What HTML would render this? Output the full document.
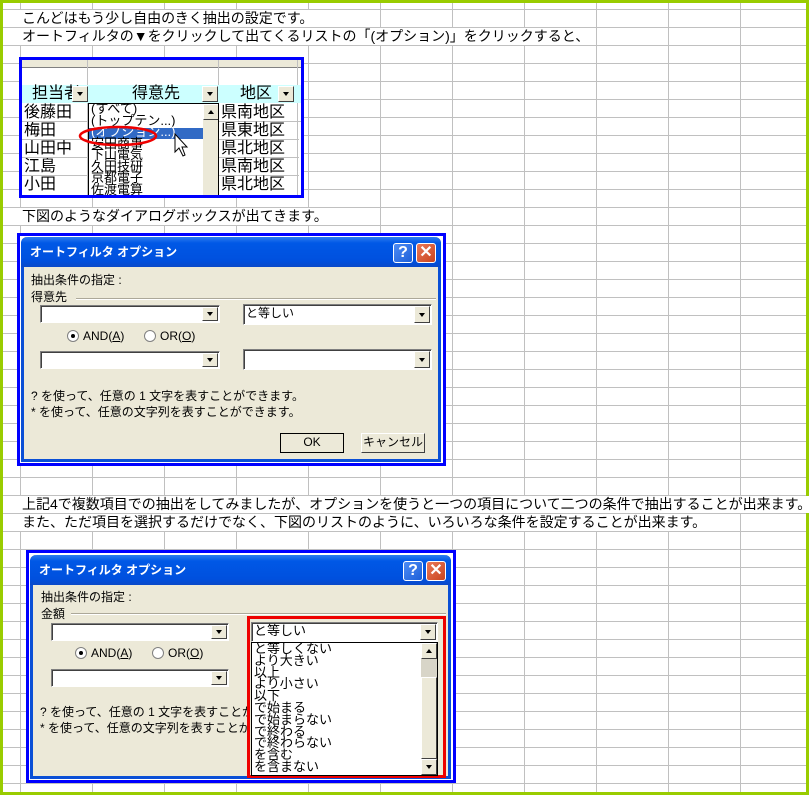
<!DOCTYPE html>
<html><head><meta charset="utf-8"><style>
*{margin:0;padding:0;box-sizing:border-box}
body{width:809px;height:795px;position:relative;overflow:hidden;background:#fff;
font-family:"Liberation Sans","Noto Sans CJK JP","IPAGothic",sans-serif;color:#000}
#grid{position:absolute;left:0;top:0;width:809px;height:795px;
background:linear-gradient(to right,#c0c0c0 1px,transparent 1px) 20px 0/72px 100%,
linear-gradient(#c0c0c0 1px,transparent 1px) 0 9px/100% 18px}
.a{position:absolute}
.t{position:absolute;background:#fff;font-size:14px;line-height:17px;height:17px;white-space:nowrap;padding-left:2px}
.frame{position:absolute;border:3px solid #0000ff;background:#fff;overflow:hidden}
.dlg{position:absolute;background:#ece9d8;border:3px solid #0a4fd6;border-top:none;border-radius:6px 6px 0 0;font-size:12px}
.title{position:absolute;left:-3px;right:-3px;top:0;height:30px;border-radius:7px 7px 0 0;
background:linear-gradient(#2d7cf0,#0058e6 20%,#0050de 80%,#0a49c8);color:#fff;font-weight:bold;font-size:12px;line-height:30px;padding-left:9px}
.hb,.xb{position:absolute;top:6px;width:20px;height:20px;border:1px solid #fff;border-radius:3px;color:#fff;font-weight:bold;text-align:center;line-height:18px;font-size:16px}
.hb{background:linear-gradient(135deg,#4d8cf5,#1d5fd8)}
.xb{background:linear-gradient(135deg,#e9795a,#c9441e)}
.cb{position:absolute;background:#fff;border:1px solid #7f7f7f;border-right-color:#fff;border-bottom-color:#fff;box-shadow:inset 1px 1px 0 #404040;font-size:12px;line-height:16px;padding-left:2px}
.btn{position:absolute;right:1px;top:1px;bottom:1px;width:16px;background:#ece9d8;border:1px solid;border-color:#fff #404040 #404040 #fff}
.btn:after{content:"";position:absolute;left:4px;top:50%;margin-top:-2px;border:3px solid transparent;border-top:4px solid #000;border-bottom:none}
.push{position:absolute;height:20px;background:#ece9d8;border:1px solid;border-color:#fff #404040 #404040 #fff;text-align:center;font-size:12px;line-height:17px}
.rad{position:absolute;width:12px;height:12px;border-radius:50%;background:#fff;border:1px solid #808080}
.rad.on:after{content:"";position:absolute;left:3px;top:3px;width:4px;height:4px;border-radius:50%;background:#000}
.sb{position:absolute;background:#ece9d8}
.sbb{position:absolute;left:0;width:16px;height:16px;background:#ece9d8;border:1px solid;border-color:#fff #404040 #404040 #fff}
.up:after,.dn:after{content:"";position:absolute;left:4px;top:5px;border:3px solid transparent}
.up:after{border-bottom:4px solid #000;border-top:none}
.dn:after{border-top:4px solid #000;border-bottom:none}
</style></head><body>
<div id="grid"></div>
<div class="a" style="left:0;top:0;width:809px;height:3px;background:#99cc00"></div>
<div class="a" style="left:0;top:0;width:3px;height:795px;background:#99cc00"></div>
<div class="a" style="left:806px;top:0;width:3px;height:795px;background:#99cc00"></div>
<div class="a" style="left:0;top:792px;width:809px;height:3px;background:#99cc00"></div>

<div class="t" style="left:20px;top:10px">こんどはもう少し自由のきく抽出の設定です。</div>
<div class="t" style="left:20px;top:28px">オートフィルタの▼をクリックして出てくるリストの「(オプション)」をクリックすると、</div>

<div class="frame" style="left:19px;top:57px;width:285px;height:141px">
 <div class="a" style="left:0;top:0;width:300px;height:8px;background:#ece9d8;border-bottom:1px solid #808080"></div>
 <div class="a" style="left:65px;top:0;width:1px;height:140px;background:#c0c0c0"></div>
 <div class="a" style="left:196px;top:0;width:1px;height:140px;background:#c0c0c0"></div>
 <div class="a" style="left:275px;top:0;width:1px;height:140px;background:#c0c0c0"></div>
 <div class="a" style="left:0;top:25px;width:280px;height:18px;background:#ccffff;font-size:16px;line-height:18px">
  <span class="a" style="left:10px">担当者</span><span class="a" style="left:110px">得意先</span><span class="a" style="left:218px">地区</span>
  <div class="a" style="left:50px;top:1px;width:16px;height:16px;background:#ece9d8;border:1px solid;border-color:#fff #404040 #404040 #fff"><div class="dn a" style="left:0;top:0;width:14px;height:14px"></div></div>
  <div class="a" style="left:180px;top:1px;width:16px;height:16px;background:#ece9d8;border:1px solid;border-color:#fff #404040 #404040 #fff"><div class="dn a" style="left:0;top:0;width:14px;height:14px"></div></div>
  <div class="a" style="left:256px;top:1px;width:16px;height:16px;background:#ece9d8;border:1px solid;border-color:#fff #404040 #404040 #fff"><div class="dn a" style="left:0;top:0;width:14px;height:14px"></div></div>
 </div>
 <div class="a" style="left:2px;top:44px;font-size:16px;line-height:18px">後藤田<br>梅田<br>山田中<br>江島<br>小田</div>
 <div class="a" style="left:0;top:61px;width:280px;height:1px;background:#c0c0c0"></div>
 <div class="a" style="left:0;top:79px;width:65px;height:1px;background:#c0c0c0"></div>
 <div class="a" style="left:0;top:97px;width:65px;height:1px;background:#c0c0c0"></div>
 <div class="a" style="left:0;top:115px;width:65px;height:1px;background:#c0c0c0"></div>
 <div class="a" style="left:197px;top:79px;width:80px;height:1px;background:#c0c0c0"></div>
 <div class="a" style="left:197px;top:97px;width:80px;height:1px;background:#c0c0c0"></div>
 <div class="a" style="left:197px;top:115px;width:80px;height:1px;background:#c0c0c0"></div>
 <div class="a" style="left:199px;top:44px;font-size:16px;line-height:18px">県南地区<br>県東地区<br>県北地区<br>県南地区<br>県北地区</div>
 <div class="a" style="left:66px;top:43px;width:131px;height:95px;background:#fff;border:1px solid #000;overflow:hidden">
  <div class="a" style="left:0;top:24px;width:114px;height:11px;background:#316ac5"></div>
  <div class="a" style="left:2px;top:-1px;font-size:13px;line-height:11.5px">(すべて)<br>(トップテン...)<br><span style="color:#fff">(オプション...)</span><br>安田商事<br>下山電気<br>久田技研<br>京都電子<br>佐渡電算</div>
  <div class="sb" style="left:114px;top:0;width:16px;height:95px"><div class="sbb up" style="top:0"></div></div>
 </div>
 <svg class="a" style="left:0;top:0" width="285" height="141"><ellipse cx="96" cy="76" rx="38" ry="9" fill="none" stroke="#e00" stroke-width="2.5"/>
 <path d="M153 74 L153 92 L157 88 L161 96 L163 95 L160 87 L165 87 Z" fill="#fff" stroke="#000" stroke-width="1"/></svg>
</div>

<div class="t" style="left:20px;top:208px">下図のようなダイアログボックスが出てきます。</div>

<div class="frame" style="left:17px;top:233px;width:429px;height:233px"></div>
<div class="dlg" style="left:21px;top:237px;width:420px;height:225px">
 <div class="title">オートフィルタ オプション<div class="hb" style="left:372px">?</div><div class="xb" style="left:395px">✕</div></div>
 <div class="a" style="left:7px;top:34px">抽出条件の指定 :</div>
 <div class="a" style="left:7px;top:51px">得意先</div>
 <div class="a" style="left:52px;top:61px;width:360px;height:2px;border-top:1px solid #aca899;border-bottom:1px solid #fff"></div>
 <div class="cb" style="left:16px;top:68px;width:180px;height:18px"><div class="btn"></div></div>
 <div class="cb" style="left:219px;top:67px;width:189px;height:21px">と等しい<div class="btn"></div></div>
 <div class="rad on" style="left:43px;top:93px"></div><div class="a" style="left:59px;top:92px">AND(<u>A</u>)</div>
 <div class="rad" style="left:120px;top:93px"></div><div class="a" style="left:136px;top:92px">OR(<u>O</u>)</div>
 <div class="cb" style="left:16px;top:114px;width:180px;height:18px"><div class="btn"></div></div>
 <div class="cb" style="left:219px;top:112px;width:189px;height:21px"><div class="btn"></div></div>
 <div class="a" style="left:7px;top:150px">? を使って、任意の 1 文字を表すことができます。</div>
 <div class="a" style="left:7px;top:166px">* を使って、任意の文字列を表すことができます。</div>
 <div class="push" style="left:256px;top:196px;width:64px;border:1px solid #000">OK</div>
 <div class="push" style="left:337px;top:196px;width:64px">キャンセル</div>
</div>

<div class="t" style="left:20px;top:496px">上記4で複数項目での抽出をしてみましたが、オプションを使うと一つの項目について二つの条件で抽出することが出来ます。</div>
<div class="t" style="left:20px;top:514px">また、ただ項目を選択するだけでなく、下図のリストのように、いろいろな条件を設定することが出来ます。</div>

<div class="frame" style="left:26px;top:550px;width:430px;height:233px"></div>
<div class="dlg" style="left:30px;top:555px;width:421px;height:224px">
 <div class="title">オートフィルタ オプション<div class="hb" style="left:373px">?</div><div class="xb" style="left:396px">✕</div></div>
 <div class="a" style="left:8px;top:33px">抽出条件の指定 :</div>
 <div class="a" style="left:8px;top:50px">金額</div>
 <div class="a" style="left:38px;top:58px;width:375px;height:2px;border-top:1px solid #aca899;border-bottom:1px solid #fff"></div>
 <div class="cb" style="left:18px;top:68px;width:178px;height:18px"><div class="btn"></div></div>
 <div class="rad on" style="left:42px;top:92px"></div><div class="a" style="left:58px;top:91px">AND(<u>A</u>)</div>
 <div class="rad" style="left:119px;top:92px"></div><div class="a" style="left:135px;top:91px">OR(<u>O</u>)</div>
 <div class="cb" style="left:18px;top:114px;width:178px;height:18px"><div class="btn"></div></div>
 <div class="a" style="left:7px;top:148px">? を使って、任意の 1 文字を表すことができます。</div>
 <div class="a" style="left:7px;top:164px">* を使って、任意の文字列を表すことができます。</div>
</div>
<div class="a" style="left:247px;top:616px;width:199px;height:162px;border:3px solid #ee0000;background:#ece9d8"></div>
<div class="cb" style="left:251px;top:622px;width:187px;height:20px;font-size:13px">と等しい<div class="btn"></div></div>
<div class="a" style="left:251px;top:642px;width:187px;height:134px;background:#fff;border:1px solid #000;overflow:hidden">
 <div class="a" style="left:2px;top:0;font-size:13px;line-height:11.8px">と等しくない<br>より大きい<br>以上<br>より小さい<br>以下<br>で始まる<br>で始まらない<br>で終わる<br>で終わらない<br>を含む<br>を含まない</div>
 <div class="sb" style="left:169px;top:0;width:16px;height:132px">
  <div class="sbb up" style="top:0"></div>
  <div class="a" style="left:0;top:16px;width:16px;height:18px;background:#d8d5c8"></div>
  <div class="sbb" style="top:34px;height:82px"></div>
  <div class="sbb dn" style="top:116px"></div>
 </div>
</div>
</body></html>
